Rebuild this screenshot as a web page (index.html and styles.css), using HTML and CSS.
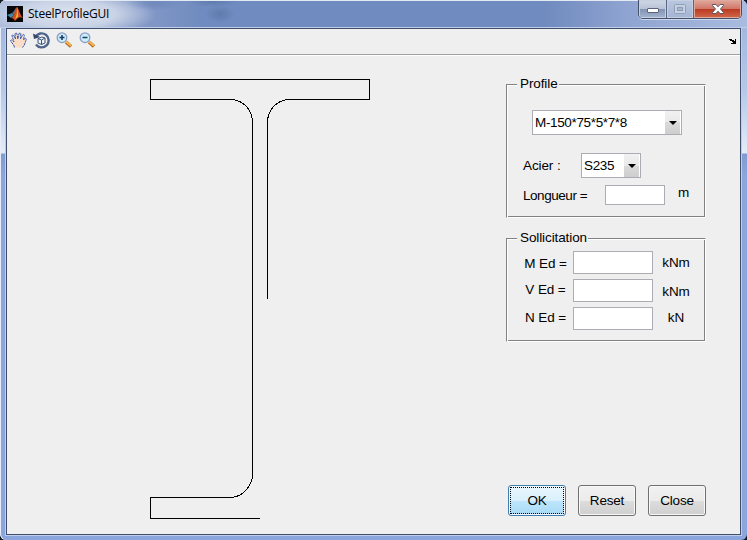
FILE: index.html
```html
<!DOCTYPE html>
<html lang="fr">
<head>
<meta charset="utf-8">
<title>SteelProfileGUI</title>
<link rel="stylesheet" href="styles.css">
</head>
<body>
<div class="window">
  <header class="titlebar">
    <svg class="app-icon" width="16" height="16" viewBox="0 0 16 16">
      <rect width="16" height="16" fill="#080808"/>
      <path d="M0 9l5-2 2 2-3 3z" fill="#3f86a8"/>
      <path d="M5 7c2-1 3-5 5-6L7 9z" fill="#5d6d80"/>
      <path d="M4 12c3 0 4-9 6-11 2 2 3 8 6 11-3-1-4-2-8 3-1-2-2-3-4-3z" fill="#d0501f"/>
      <path d="M8 13c2-3 2-8 2-12 1 4 1 7 1 10z" fill="#f3b23c"/>
    </svg>
    <h1 class="title">SteelProfileGUI</h1>
    <div class="controls">
      <span class="control control-min"><svg width="14" height="12" viewBox="0 0 14 12"><rect x="1.500" y="5.500" width="11" height="4" rx=".5" fill="#fff" stroke="#59647c"/></svg></span>
      <span class="control control-max"><svg width="14" height="12" viewBox="0 0 14 12"><rect x="1.500" y="1.500" width="11" height="9" rx="1" fill="#c6d0e3" stroke="#929fb8"/><rect x="4.500" y="4.500" width="5" height="3" fill="#aab7d0" stroke="#8d9ab4"/></svg></span>
      <span class="control control-close"><svg width="14" height="12" viewBox="0 0 14 12"><path d="M1.500 1.500h3.500l2 2.300 2-2.300h3.500v1L9.500 6l3 3.500v1H9L7 8.200l-2 2.300H1.500v-1l3-3.500-3-3.500z" fill="#fff" stroke="#5b5661"/></svg></span>
    </div>
  </header>
  <main class="client">
    <nav class="toolbar">
      <svg width="17" height="17" viewBox="0 0 17 17"><path d="M4.500 15.500C4 12 .5 10 .5 8.500c1-1.200 2.500.2 3.500 1.500L2 4c0-1.500 1.500-1.500 2 0l1.500 3L5 2c.2-1.500 1.700-1.500 2 0l.8 5L9 1.800c.3-1.400 1.900-1.100 1.800.2L10.500 7l2-4c.8-1.100 2-.5 1.800.7L13.500 8c1-2 3.200-2.200 2.800-.5-1 2-1.300 5.500-3.800 8z" fill="#fbdcc5"/><path d="M4.500 15.500C4 12 .5 10 .5 8.500c1-1.200 2.500.2 3.500 1.500L2 4c0-1.500 1.500-1.500 2 0l1.500 3L5 2c.2-1.500 1.700-1.500 2 0l.8 5L9 1.800c.3-1.400 1.900-1.100 1.800.2L10.500 7l2-4c.8-1.100 2-.5 1.800.7L13.500 8c1-2 3.200-2.200 2.800-.5-1 2-1.300 5.500-3.800 8" fill="none" stroke="#3c5cae" stroke-dasharray="3 .5"/></svg>
      <svg width="17" height="17" viewBox="0 0 17 17"><path d="M2.500 5A7 7 0 1 1 3 12.500" fill="none" stroke="#50648b" stroke-width="2.400"/><path d="M0 1.500l1 5.500 6-2z" fill="#34466b"/><path d="M5 6.500l4-1.500 3 1v5l-3.500 1.500L5 11zM5 6.500L8.500 8 12 6M8.500 8v4.500" fill="#eef3fb" stroke="#3d5277"/></svg>
      <svg width="17" height="17" viewBox="0 0 17 17"><path d="M10 10l5 4.500" stroke="#b66f20" stroke-width="3.600"/><path d="M10 9.500l5 4.300" stroke="#f6b653" stroke-width="2"/><circle cx="6" cy="5.700" r="4.800" fill="#c9f0fa" stroke="#8d9bc8" stroke-width="1.300"/><path d="M3.500 5.500h5M6 3v5" stroke="#203b65" stroke-width="1.600"/></svg>
      <svg width="17" height="17" viewBox="0 0 17 17"><path d="M10 10l5 4.500" stroke="#b66f20" stroke-width="3.600"/><path d="M10 9.500l5 4.300" stroke="#f6b653" stroke-width="2"/><circle cx="6" cy="5.700" r="4.800" fill="#c9f0fa" stroke="#8d9bc8" stroke-width="1.300"/><path d="M3.500 5.500h5" stroke="#203b65" stroke-width="1.600"/></svg>
      <svg class="dock" width="7" height="5" viewBox="0 0 7 5" shape-rendering="crispEdges"><path d="M0 0h3v1h2v1h1V0h1v5H2V4h2V3H3V2H1V1H0z"/></svg>
    </nav>
    <div class="workspace">
      <svg class="drawing" width="220" height="440" viewBox="150 79 220 440" shape-rendering="crispEdges">
        <path d="M259.500 518.500H150.500V497.500H232.500Q248 494.500 252.500 477.500V119.500Q249 102 232.500 99.500H150.500V79.500H369.500V99.500H287.500Q271 102 267.500 119.500V298.500" fill="none" stroke="#000"/>
      </svg>
      <aside class="side">
        <section class="group profile">
          <h2 class="legend">Profile</h2>
          <div class="select select-profile"><span>M-150*75*5*7*8</span><i class="arrow"></i></div>
          <div class="row row-steel"><label>Acier :</label><div class="select select-steel"><span>S235</span><i class="arrow"></i></div></div>
          <div class="row row-length"><label>Longueur =</label><input class="field"><span class="unit">m</span></div>
        </section>
        <section class="group loads">
          <h2 class="legend">Sollicitation</h2>
          <div class="load"><label>M Ed =</label><input class="field"><span class="unit">kNm</span></div>
          <div class="load load-v"><label>V Ed =</label><input class="field"><span class="unit">kNm</span></div>
          <div class="load load-n"><label>N Ed =</label><input class="field"><span class="unit">kN</span></div>
        </section>
        <div class="actions">
          <button class="button primary">OK</button>
          <button class="button">Reset</button>
          <button class="button">Close</button>
        </div>
      </aside>
    </div>
  </main>
</div>
</body>
</html>
```
FILE: styles.css
```css
* { box-sizing: border-box; }
body {
  margin: 0;
  background: #111820;
  overflow: hidden;
  color: #000;
  font: 13.5px/16px "Liberation Sans", Arial, sans-serif;
  letter-spacing: -0.1px;
}
h1, h2 { margin: 0; font-weight: normal; }
svg { display: block; flex: none; }
.window {
  width: 747px;
  height: 540px;
  display: flex;
  flex-direction: column;
  padding: 0 6px 5px;
  border-radius: 6px;
  overflow: hidden;
  background: linear-gradient(#a9bbdd 0, #a4b8df 28px, #b6c8e8 90px, #e4ecf7 153px, #809bd2 154px, #8ba6dc 175px, #8ba6dc);
  box-shadow: inset 1px 0 #e6edf8;
}
.titlebar {
  height: 28px;
  flex: none;
  display: flex;
  align-items: flex-start;
  margin: 0 -6px;
  padding: 0 5px 0 7px;
  background:
    radial-gradient(ellipse 28px 8px at 154px 3px, #5f7caf80, transparent),
    radial-gradient(ellipse 26px 6px at 213px 1px, #536f9f99, transparent),
    radial-gradient(ellipse 15px 9px at 220px 14px, #536f9f99, transparent),
    radial-gradient(ellipse 90px 24px at 66px 14px, #dde4f0 0, #c9d3e6 55%, #c9d3e600),
    linear-gradient(90deg, #a3b4d7, #869bc9 18%, #708bbf 27%, #708bbf 73%, #8fa4d1 84%, #a9bbdf);
  box-shadow: inset 0 1px #e3eaf4, inset 0 -1px #c0cee8;
}
.app-icon { margin-top: 6px; }
.title {
  margin: 6px 0 0 5px;
  font: 12px/16px "Open Sans", "Noto Sans", sans-serif;
  letter-spacing: -0.22px;
}
.controls {
  display: flex;
  width: 104px;
  height: 19px;
  margin-left: auto;
  border: 1px solid #445069;
  border-top: 0;
  border-radius: 0 0 5px 5px;
  overflow: hidden;
  box-shadow: 0 1px #ccd8ed;
}
.control {
  display: flex;
  width: 28px;
  align-items: center;
  justify-content: center;
  border-right: 1px solid #58657f;
  background: linear-gradient(#d0d8e5 0, #b8c3d7 48%, #8191b0 50%, #a5b6d3);
  box-shadow: inset 0 0 0 1px #c6d0e1;
}
.control-max { width: 27px; background: linear-gradient(#bac7df, #a4b4d3); }
.control-close {
  width: 47px;
  border: 0;
  background: linear-gradient(#e0a99c 0, #cf786a 48%, #b93821 50%, #d2694a);
  box-shadow: inset 0 0 0 1px #dfa99e;
}
.client {
  width: 735px;
  height: 507px;
  border: 1px solid #3f4e6c;
  outline: 1px solid #c0cee8;
  background: #efefef;
}
.toolbar {
  display: flex;
  height: 27px;
  padding: 3px 4px 0 3px;
  gap: 6px;
  border-bottom: 1px solid #fff;
  box-shadow: inset 0 -1px #a0a0a0;
}
.dock { margin: 7px 0 0 auto; }
.workspace { display: flex; padding: 23px 34px 0 143px; justify-content: space-between; }
.side { width: 200px; padding-top: 5px; }
.group {
  border: 1px solid #828282;
  border-right-color: #fff;
  border-bottom-color: #fff;
  box-shadow: inset 1px 1px #fff, inset -1px -1px #828282;
}
.profile { height: 134px; margin-bottom: 20px; }
.loads { height: 104px; }
.legend {
  width: fit-content;
  height: 16px;
  margin: -9px 0 0 10px;
  padding: 0 1px 0 3px;
  background: #efefef;
  font: inherit;
}
.select {
  display: flex;
  height: 25px;
  align-items: center;
  justify-content: space-between;
  padding: 0 1px 0 2px;
  border: 1px solid #abadb3;
  background: #fff;
  letter-spacing: -0.35px;
}
.arrow {
  display: flex;
  width: 15px;
  height: 23px;
  align-items: center;
  justify-content: center;
  background: linear-gradient(#f1f1f1, #e9e9e9 50%, #dadada 50%, #cecece);
}
.arrow::after { content: ""; border: 4px solid transparent; border-top-color: #000; border-bottom: 0; }
.select-profile { width: 150px; margin: 18px 0 0 25px; }
.row { display: flex; padding-left: 16px; }
.row-steel { margin-top: 18px; }
.row-steel label { width: 58px; padding-top: 5px; }
.select-steel { width: 60px; }
.row-length { margin-top: 7px; }
.row-length label { width: 82px; padding-top: 3px; letter-spacing: -0.45px; }
.field {
  width: 60px;
  height: 20px;
  padding: 0 3px;
  border: 1px solid #abadb3;
  background: #fff;
  border-radius: 0;
  font: inherit;
}
.row-length .unit { margin-left: 13px; }
.load { display: grid; grid-template-columns: 48px 80px 44px; margin-left: 18px; height: 23px; margin-bottom: 5px; }
.legend + .load { margin-top: 5px; }
.load .field { width: 80px; height: 23px; }
.load label { padding-top: 5px; text-align: center; margin-right: 6px; margin-left: -1px; }
.load .unit { padding-top: 4px; text-align: center; margin-left: 2px; }
.load-v label { padding-top: 3px; }
.load-v .unit { padding-top: 5px; }
.load-n label, .load-n .unit { padding-top: 3px; }
.actions { display: flex; justify-content: space-between; margin: 143px 0 0 2px; }
.button {
  width: 58px;
  height: 31px;
  padding: 0;
  border: 1px solid #707070;
  border-radius: 3px;
  background: linear-gradient(#f2f2f2, #ebebeb 50%, #dddddd 50%, #cfcfcf);
  box-shadow: inset 0 0 0 1px #f8f8f8;
  font: inherit;
  letter-spacing: -0.2px;
  color: #000;
}
.primary {
  border-color: #3c7fb1;
  background: linear-gradient(#eaf6fd, #d9f0fc 50%, #bee6fd 50%, #a7d9f5);
  outline: 1px dotted #000;
  outline-offset: -3px;
}
```
